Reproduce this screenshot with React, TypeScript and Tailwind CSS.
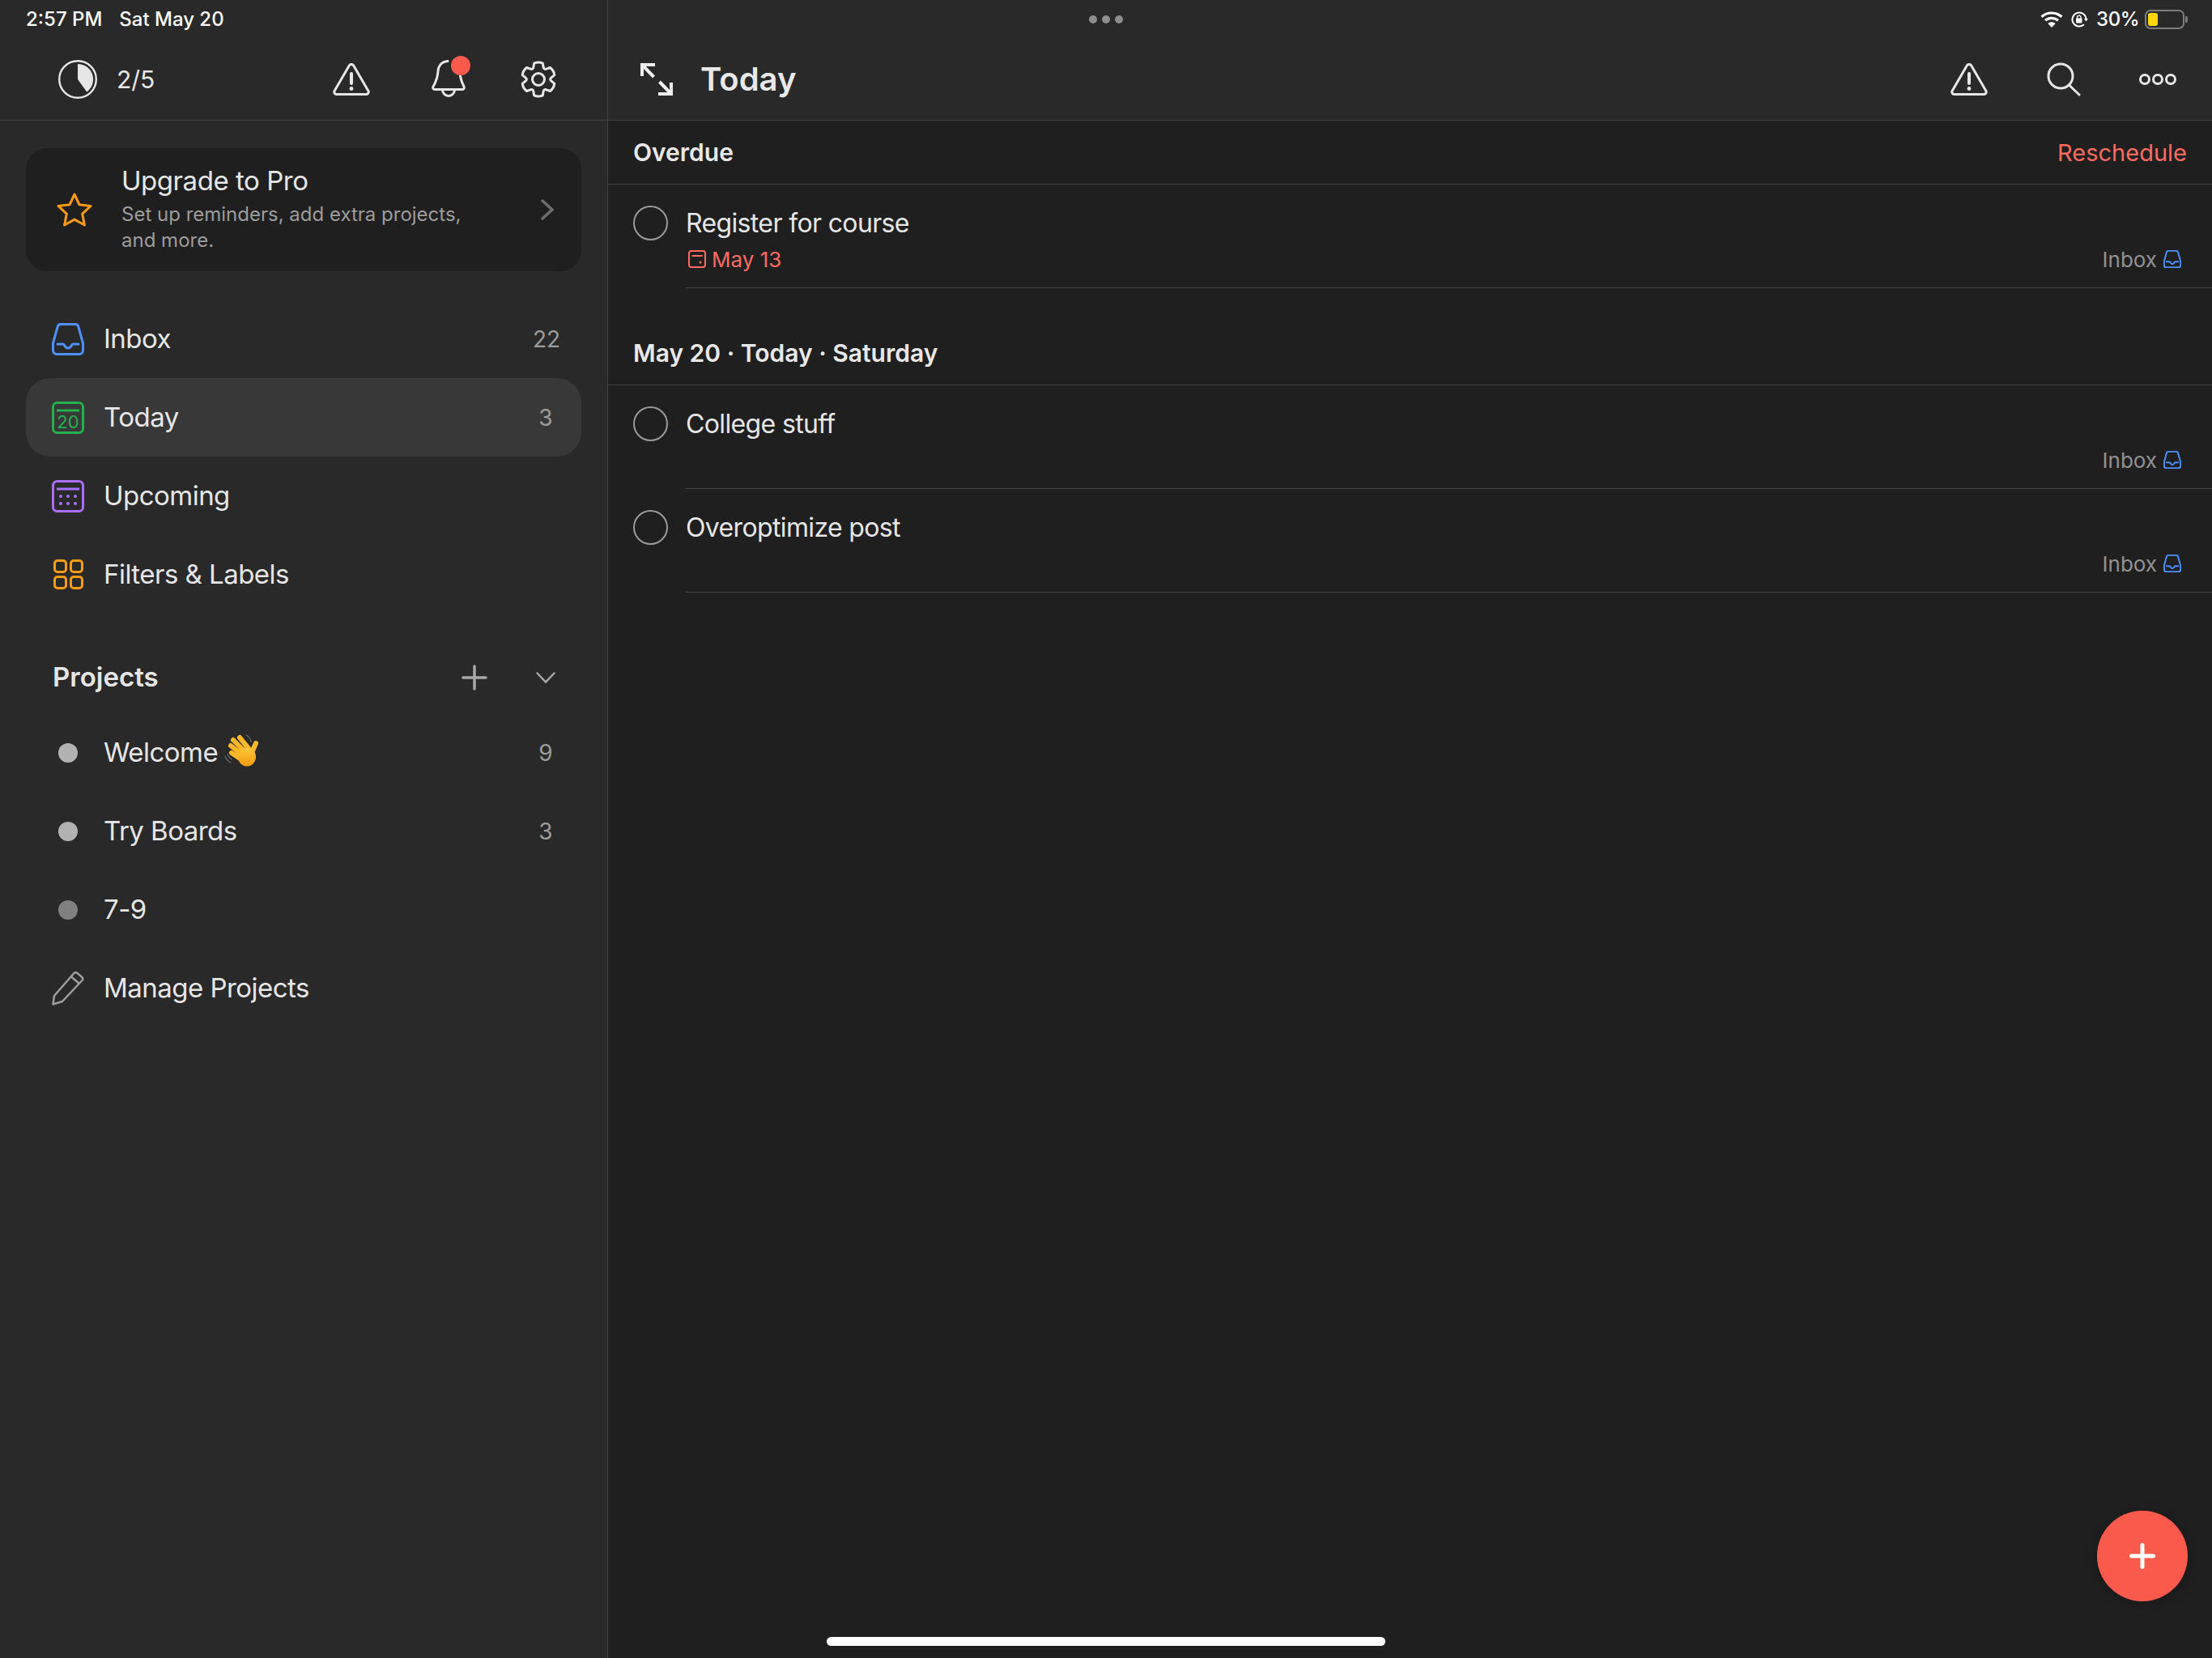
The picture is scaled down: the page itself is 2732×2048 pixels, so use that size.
import React from "react";

const BLUE = "#4d90fe";
const gearPath = (() => {
  const p = (r: number, deg: number) => {
    const a = (deg * Math.PI) / 180;
    return `${(23 + r * Math.sin(a)).toFixed(2)} ${(23 - r * Math.cos(a)).toFixed(2)}`;
  };
  let d = "";
  for (let i = 0; i < 6; i++) {
    const t = i * 60;
    d += `${i === 0 ? "M" : "L"}${p(15.5, t - 24)} L${p(20.5, t - 15)} Q${p(22, t)} ${p(20.5, t + 15)} L${p(15.5, t + 24)} Q${p(14, t + 30)} `;
    d += p(15.5, t + 36) + " ";
  }
  return d + "Z";
})();
const Gear = () => (
  <svg width="46" height="46" viewBox="0 0 46 46" fill="none" stroke="#e6e6e6" strokeWidth="3" strokeLinejoin="round">
    <path d={gearPath} />
    <circle cx="23" cy="23" r="7.500" />
  </svg>
);
const Inbox = ({ s = 40, w = 3 }: { s?: number; w?: number }) => (
  <svg width={s} height={s} viewBox="0 0 40 40" fill="none" stroke={BLUE} strokeWidth={w * (40 / s)} strokeLinecap="round" strokeLinejoin="round">
    <path d="M11 1.500h18a4 4 0 0 1 3.800 3L38.500 25v9a4.500 4.500 0 0 1-4.500 4.500H6A4.500 4.500 0 0 1 1.500 34v-9L7.200 4.500a4 4 0 0 1 3.800-3z" />
    <path d="M7 26h7c1.500 0 2 5 6 5s4.500-5 6-5h7" />
  </svg>
);
const Today = () => (
  <svg width="40" height="40" viewBox="0 0 40 40" fill="none" stroke="#22b14c" strokeWidth="3">
    <rect x="1.500" y="1.500" width="37" height="37" rx="5" />
    <path d="M6 11h28" />
    <text x="20" y="32.500" textAnchor="middle" fill="#22b14c" stroke="none" fontSize="22" fontFamily="Inter">20</text>
  </svg>
);
const Upcoming = () => (
  <svg width="40" height="40" viewBox="0 0 40 40" fill="none" stroke="#a970ff" strokeWidth="3">
    <rect x="1.500" y="1.500" width="37" height="37" rx="5" />
    <path d="M6 11h28" />
    <g fill="#a970ff" stroke="none">
      <circle cx="11" cy="20" r="2" /><circle cx="20" cy="20" r="2" /><circle cx="29" cy="20" r="2" />
      <circle cx="11" cy="29" r="2" /><circle cx="20" cy="29" r="2" /><circle cx="29" cy="29" r="2" />
    </g>
  </svg>
);
const Filters = () => (
  <svg width="40" height="40" viewBox="0 0 40 40" fill="none" stroke="#ff9a14" strokeWidth="3">
    <rect x="3.500" y="2.500" width="14" height="14" rx="3.500" />
    <rect x="23.500" y="2.500" width="14" height="14" rx="3.500" />
    <rect x="3.500" y="22.500" width="14" height="14" rx="3.500" />
    <rect x="23.500" y="22.500" width="14" height="14" rx="3.500" />
  </svg>
);
const Pencil = () => (
  <svg width="40" height="42" viewBox="0 0 40 42" fill="none" stroke="#9e9e9e" strokeWidth="2.500" strokeLinejoin="round">
    <path d="M1.500 40.500L3 30 27 2.500c1.200-1.400 3-1.500 4.400-.4l5.600 4.600c1.400 1.200 1.500 3 .4 4.300L13 37z" />
    <path d="M24 6.500l10 8.500" />
  </svg>
);
const Warn = () => (
  <svg width="46" height="40" viewBox="0 0 46 40" fill="none" stroke="#e6e6e6" strokeWidth="3">
    <path d="M20.300 3a3.100 3.100 0 0 1 5.400 0L44 34.400a3 3 0 0 1-2.600 4.100H4.600a3 3 0 0 1-2.600-4.100z" strokeLinejoin="round" />
    <path d="M23 13v12" strokeWidth="4" strokeLinecap="round" />
    <circle cx="23" cy="31.500" r="2.400" fill="#e6e6e6" stroke="none" />
  </svg>
);
const Bell = () => (
  <svg className="overflow-visible" width="50" height="50" viewBox="0 0 50 50" fill="none" stroke="#e6e6e6" strokeWidth="3" strokeLinecap="round" strokeLinejoin="round">
    <path d="M20 2.500C13 3 8.500 8 8 15c-.5 7-2.500 13-6 19-.8 1.600 0 3.500 2 3.500h34c2 0 2.800-1.900 2-3.500-2-4-3.500-7-4.500-13" />
    <path d="M13.500 38a7.500 7.500 0 0 0 15 0" />
    <circle cx="36" cy="8" r="12" fill="#fa5a4c" stroke="none" />
  </svg>
);
const Progress = () => (
  <svg width="48" height="48" viewBox="0 0 48 48" fill="none">
    <circle cx="24" cy="24" r="22.800" stroke="#e6e6e6" strokeWidth="2.400" />
    <path d="M24 5a19 19 0 0 1 11.200 34.400L24 24z" fill="#e6e6e6" />
  </svg>
);
const Expand = () => (
  <svg width="40" height="40" viewBox="0 0 40 40" fill="none" stroke="#efefef" strokeWidth="4">
    <path d="M2 16V2h16M2 2l14.500 15" />
    <path d="M38 24v14H22M38 38L23.500 23" />
  </svg>
);
const Hand = () => (
  <svg width="60" height="70" viewBox="0 0 60 70" fill="none" strokeLinecap="round">
    <defs>
      <linearGradient id="hand" x1="0" y1="0" x2="0" y2="1">
        <stop offset="0" stopColor="#ffc83d" />
        <stop offset="1" stopColor="#f29a0c" />
      </linearGradient>
    </defs>
    <path d="M36 15c3 1 5 4 6 8M10 41c1 3 3 6 7 8M13 39c1 2 2 4 5 6" stroke="#6b6b6b" strokeWidth="1.200" />
    <g stroke="#fbb92a" strokeWidth="6">
      <path d="M28 18l13 16M20 21l16 16M17 28l15 12M18 37l12 8M48 25l-6 14" />
    </g>
    <ellipse cx="37" cy="42" rx="11" ry="11.500" fill="url(#hand)" />
  </svg>
);
const Wifi = () => (
  <svg width="28" height="20" viewBox="0 0 28 20" fill="none" stroke="#fff" strokeWidth="3.200">
    <path d="M1.500 6.800C8.500.4 19.500.4 26.500 6.800" />
    <path d="M6 11.300c4.500-4 11.500-4 16 0" />
    <path d="M14 20l-4.700-5c2.700-2.200 6.700-2.200 9.400 0z" fill="#fff" stroke="none" />
  </svg>
);
const RotLock = () => (
  <svg width="22" height="20" viewBox="0 0 22 20" fill="none" stroke="#fff" strokeWidth="2">
    <path d="M18.500 10a8.500 8.500 0 1 0-2.600 6.200" />
    <path d="M16 9l5 0-2.500 3.500z" fill="#fff" stroke="none" />
    <rect x="6" y="8.500" width="7.500" height="6" rx="1" fill="#fff" stroke="none" />
    <path d="M7.500 9V7a2.300 2.300 0 0 1 4.500 0v2" strokeWidth="1.400" />
  </svg>
);
const Battery = () => (
  <div className="flex items-center gap-[1px]">
    <div className="flex h-[24px] w-[49px] items-center rounded-[7px] border-2 border-[#7c7c7c] p-[2px]">
      <div className="h-[16px] w-[12px] rounded-[3px] bg-[#ffd60a]" />
    </div>
    <div className="h-[8px] w-[3px] rounded-r-[2px] bg-[#7c7c7c]" />
  </div>
);

const NavRow = ({ icon, label, count, active }: { icon: React.ReactNode; label: React.ReactNode; count?: string; active?: boolean }) => (
  <div className={`mx-8 flex h-[97px] items-center rounded-[30px] pl-8 ${active ? "bg-[#383838]" : ""}`}>
    <div className="flex w-10 items-center justify-center">{icon}</div>
    <div className="ml-[24px] flex items-center text-[33px] tracking-[-0.016em] text-[#e6e6e6]">{label}</div>
    {count && <div className="ml-auto mr-[28px] w-[32px] text-center text-[28px] text-[#9c9c9c]">{count}</div>}
  </div>
);

const Dot = ({ c }: { c: string }) => <div className={`h-6 w-6 rounded-full ${c}`} />;

const Section = ({ title, h, right }: { title: string; h: string; right?: boolean }) => (
  <div className={`flex ${h} items-end border-b border-[#424242] pb-[16px] pl-[31px] pr-[31px]`}>
    <div className="text-[30px] font-semibold text-[#e8e8e8]">{title}</div>
    {right && <div className="mb-[1px] ml-auto text-[29px] text-[#ff6b60]">Reschedule</div>}
  </div>
);

const Task = ({ title, date }: { title: string; date?: boolean }) => (
  <div className="ml-[31px] flex h-[128px] items-start">
    <div className="mt-[26px] h-[43px] w-[43px] shrink-0 rounded-full border-2 border-[#9a9a9a]" />
    <div className="ml-[22px] flex h-full flex-1 flex-col border-b border-[#424242] pr-[38px] pt-[27px]">
      <div className="text-[32px] leading-[42px] tracking-[-0.02em] text-[#e6e6e6]">{title}</div>
      <div className="mt-[8px] flex h-[30px] items-center">
        {date && (
          <div className="flex items-center gap-[7px] pl-[3px] text-[26px] text-[#ff6b60]">
            <svg width="22" height="22" viewBox="0 0 22 22" fill="none" stroke="#ff6b60" strokeWidth="2">
              <rect x="1" y="1" width="20" height="20" rx="3" />
              <path d="M4.500 7h13" />
              <circle cx="15" cy="15" r="1.500" fill="#ff6b60" stroke="none" />
            </svg>
            May 13
          </div>
        )}
        <div className="ml-auto flex items-center gap-[8px] text-[26px] text-[#929292]">
          Inbox
          <Inbox s={22} w={2} />
        </div>
      </div>
    </div>
  </div>
);

export default function App() {
  return (
    <div className="relative flex h-[2048px] w-[2732px] overflow-hidden bg-[#1f1f1f] font-['Inter',sans-serif]">
      <aside className="flex w-[751px] shrink-0 flex-col border-r border-[#424242] bg-[#292929]">
        <div className="flex h-[48px] items-center gap-[21px] pl-8 text-[24px] font-medium text-white">
          <span>2:57 PM</span>
          <span>Sat May 20</span>
        </div>
        <div className="flex h-[101px] items-center border-b border-[#424242] pl-[72px]">
          <Progress />
          <div className="ml-[24px] w-[51px] text-[30px] text-[#e6e6e6]">2/5</div>
          <div className="ml-[216px]"><Warn /></div>
          <div className="ml-[76px]"><Bell /></div>
          <div className="ml-[59px]"><Gear /></div>
        </div>
        <div className="mx-8 mt-[34px] flex h-[152px] items-center rounded-[26px] bg-[#1f1f1f] pl-[38px]">
          <svg width="44" height="42" viewBox="0 0 44 42" fill="none" stroke="#ff9a14" strokeWidth="3" strokeLinejoin="round">
            <path d="M22 2l6 12.800 14 1.700-10.300 9.600L34.400 40 22 33.100 9.600 40l2.700-13.900L2 16.500l14-1.700z" />
          </svg>
          <div className="mb-[3px] ml-[36px] w-[440px]">
            <div className="text-[33px] leading-[40px] tracking-[-0.014em] text-[#e6e6e6]">Upgrade to Pro</div>
            <div className="mt-[6px] text-[24px] leading-[32px] text-[#9c9c9c]">Set up reminders, add extra projects, and more.</div>
          </div>
          <svg className="ml-[78px]" width="16" height="26" viewBox="0 0 16 26" fill="none" stroke="#6e6e6e" strokeWidth="3.500" strokeLinecap="round">
            <path d="M2 2l12 11L2 24" />
          </svg>
        </div>
        <div className="mt-[35px]">
          <NavRow icon={<Inbox />} label="Inbox" count="22" />
          <NavRow icon={<Today />} label="Today" count="3" active />
          <NavRow icon={<Upcoming />} label="Upcoming" />
          <NavRow icon={<Filters />} label="Filters & Labels" />
        </div>
        <div className="flex h-[123px] items-center pb-[3px] pl-[65px] pt-[38px]">
          <div className="text-[33px] font-semibold text-[#e6e6e6]">Projects</div>
          <svg className="ml-[374px]" width="32" height="32" viewBox="0 0 32 32" stroke="#a8a8a8" strokeWidth="3.500" strokeLinecap="round">
            <path d="M16 2v28M2 16h28" />
          </svg>
          <svg className="ml-[60px]" width="24" height="14" viewBox="0 0 24 14" fill="none" stroke="#a8a8a8" strokeWidth="2.500" strokeLinecap="round">
            <path d="M1.500 1.500L12 12.500 22.500 1.500" />
          </svg>
        </div>
        <div>
          <NavRow
            icon={<Dot c="bg-[#b2b2b2]" />}
            label={
              <>
                Welcome
                <span className="ml-[-1px] mt-[-3px] flex h-[70px] w-[60px]"><Hand /></span>
              </>
            }
            count="9"
          />
          <NavRow icon={<Dot c="bg-[#b2b2b2]" />} label="Try Boards" count="3" />
          <NavRow icon={<Dot c="bg-[#808080]" />} label="7-9" />
          <NavRow icon={<Pencil />} label="Manage Projects" />
        </div>
      </aside>
      <main className="flex min-w-0 flex-1 flex-col">
        <div className="flex h-[48px] items-center bg-[#292929] pr-[30px]">
          <div className="ml-[594px] flex gap-[6px]">
            <div className="h-[10px] w-[10px] rounded-full bg-[#8e8e8e]" />
            <div className="h-[10px] w-[10px] rounded-full bg-[#8e8e8e]" />
            <div className="h-[10px] w-[10px] rounded-full bg-[#8e8e8e]" />
          </div>
          <div className="ml-auto flex items-center text-[24px] font-medium tracking-[-0.02em] text-white">
            <Wifi />
            <div className="ml-[10px]"><RotLock /></div>
            <span className="ml-[9px]">30%</span>
            <div className="ml-[7px]"><Battery /></div>
          </div>
        </div>
        <div className="flex h-[101px] items-center border-b border-[#424242] bg-[#292929] pl-[40px]">
          <Expand />
          <div className="ml-[34px] text-[40px] font-semibold text-[#e8e8e8]">Today</div>
          <div className="ml-auto"><Warn /></div>
          <svg className="ml-[73px]" width="42" height="42" viewBox="0 0 42 42" fill="none" stroke="#e6e6e6" strokeWidth="3" strokeLinecap="round">
            <circle cx="17" cy="17" r="15" />
            <path d="M27.500 28l12.500 12" />
          </svg>
          <svg className="ml-[71px] mr-[43px]" width="48" height="16" viewBox="0 0 48 16" fill="none" stroke="#e6e6e6" strokeWidth="3">
            <circle cx="8" cy="8" r="5.500" />
            <circle cx="24" cy="8" r="5.500" />
            <circle cx="40" cy="8" r="5.500" />
          </svg>
        </div>
        <Section title="Overdue" h="h-[79px]" right />
        <Task title="Register for course" date />
        <Section title="May 20 · Today · Saturday" h="h-[120px]" />
        <Task title="College stuff" />
        <Task title="Overoptimize post" />
      </main>
      <div className="absolute left-[2590px] top-[1866px] flex h-[112px] w-[112px] items-center justify-center rounded-full bg-[#fa5a4c] shadow-[0_2px_16px_rgba(0,0,0,0.2)]">
        <svg width="32" height="32" viewBox="0 0 32 32" stroke="#fff" strokeWidth="5" strokeLinecap="round">
          <path d="M16 2.500v27M2.500 16h27" />
        </svg>
      </div>
      <div className="absolute left-[1021px] top-[2022px] h-[11px] w-[690px] rounded-full bg-white" />
    </div>
  );
}
